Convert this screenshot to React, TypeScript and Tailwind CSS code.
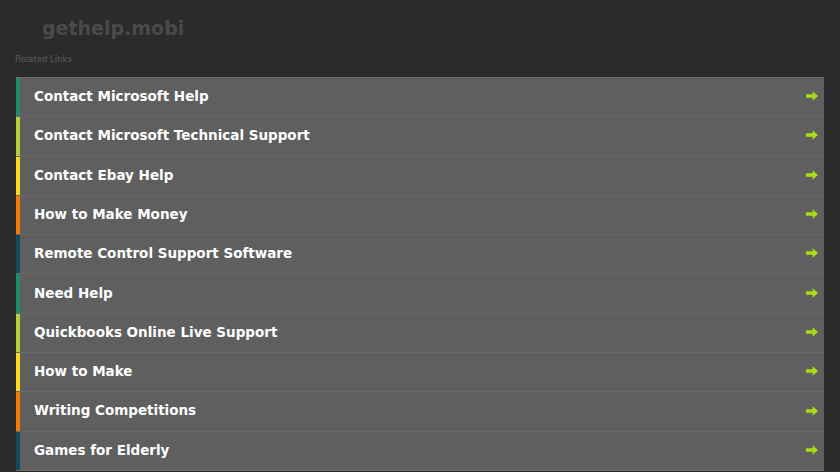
import React from 'react';

const links = [
  { label: 'Contact Microsoft Help', color: 'bg-[#1f8a6c]' },
  { label: 'Contact Microsoft Technical Support', color: 'bg-[#b5d03a]' },
  { label: 'Contact Ebay Help', color: 'bg-[#fcd91c]' },
  { label: 'How to Make Money', color: 'bg-[#f67a05]' },
  { label: 'Remote Control Support Software', color: 'bg-[#114b60]' },
  { label: 'Need Help', color: 'bg-[#1f8a6c]' },
  { label: 'Quickbooks Online Live Support', color: 'bg-[#b5d03a]' },
  { label: 'How to Make', color: 'bg-[#fcd91c]' },
  { label: 'Writing Competitions', color: 'bg-[#f67a05]' },
  { label: 'Games for Elderly', color: 'bg-[#114b60]' },
];

const Arrow: React.FC = () => (
  <svg width="12" height="10" viewBox="0 0 12 10" className="shrink-0">
    <path d="M0 3.3h6.6V0.2L12 5 6.6 9.8V6.7H0z" fill="#a9dc16" />
  </svg>
);

const App: React.FC = () => {
  return (
    <div
      className="w-[840px] h-[472px] overflow-hidden bg-[#2b2b2b] flex flex-col"
      style={{ fontFamily: '"DejaVu Sans", Verdana, sans-serif' }}
    >
      {/* Header */}
      <div className="h-[50px] pl-[42px] pt-[15px]">
        <div className="text-[19px] leading-[26px] font-bold text-[#4a4a4a]">gethelp.mobi</div>
      </div>
      <div className="pl-[15px] h-[27px] pt-[3px] text-[8.5px] leading-[12px] text-[#5c5c5c]">Related Links</div>

      {/* Link list */}
      <div className="mx-[16px] border-t border-[#6c6c6c] flex flex-col">
        {links.map((link) => (
          <div
            key={link.label}
            className="h-[39.3px] flex items-stretch bg-[#5f5f5f] border-b border-[#686868]"
          >
            <div className={`w-[4px] shrink-0 ${link.color}`} />
            <div className="flex-1 flex items-center justify-between pl-[14px] pr-[6px] pb-[2px]">
              <span className="text-[13.5px] font-bold text-white whitespace-nowrap">{link.label}</span>
              <Arrow />
            </div>
          </div>
        ))}
      </div>
    </div>
  );
};

export default App;
